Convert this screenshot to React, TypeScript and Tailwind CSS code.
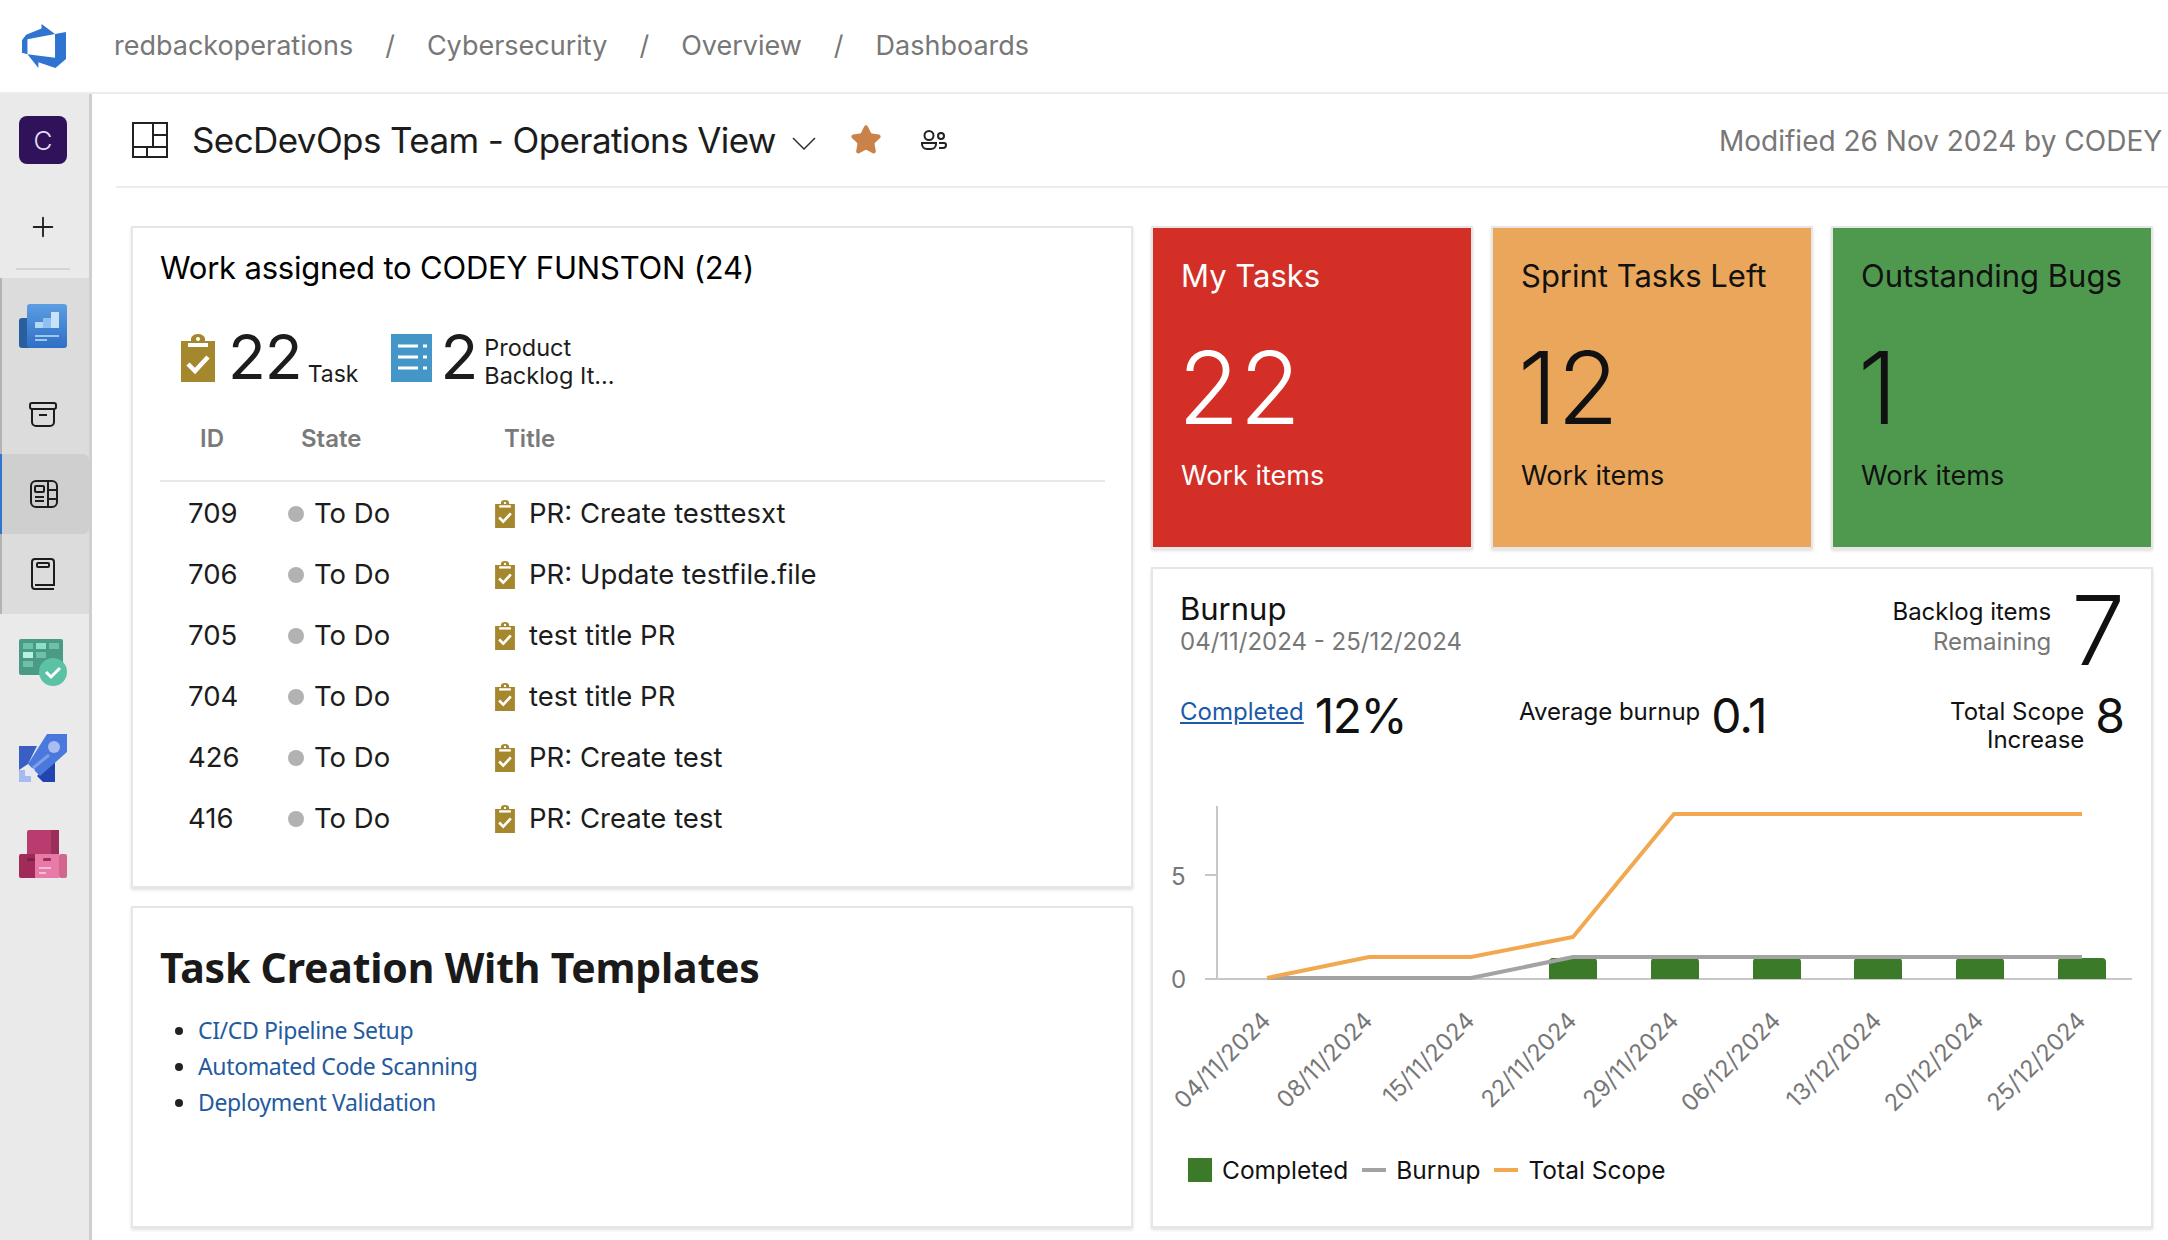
import React from "react";
import { LuPlus, LuStar } from "react-icons/lu";

const font = { fontFamily: "Inter, 'Liberation Sans', sans-serif" };

function Logo() {
  return (
    <svg viewBox="0 0 24 24" className="w-[44px] h-[44px]" fill="#2f74d0">
      <path d="M0 8.877L2.247 5.91l8.405-3.416V.022l7.37 5.393L2.966 8.338v8.225L0 15.707zm24-4.45v14.651l-5.753 4.9-9.303-3.057v3.056l-5.978-7.416 15.057 1.798V5.415z" />
    </svg>
  );
}

function OverviewIcon() {
  return (
    <svg viewBox="0 0 48 44" className="w-[48px] h-[44px]">
      <defs>
        <linearGradient id="ov" x1="0" y1="0" x2="0" y2="1">
          <stop offset="0" stopColor="#5c9de2" />
          <stop offset="1" stopColor="#2f6fc6" />
        </linearGradient>
      </defs>
      <rect x="0" y="14" width="14" height="30" rx="3" fill="#2a5f9e" />
      <rect x="8" y="0" width="40" height="44" rx="3" fill="url(#ov)" />
      <rect x="16" y="18" width="8" height="6" fill="#b6d6f5" />
      <rect x="24" y="14" width="8" height="10" fill="#8fc0ee" />
      <rect x="32" y="8" width="8" height="16" fill="#c9e2f8" />
      <rect x="16" y="31" width="24" height="2" fill="#9cc7f0" />
      <rect x="16" y="35" width="12" height="2" fill="#9cc7f0" />
    </svg>
  );
}

function BoxIcon() {
  return (
    <svg viewBox="0 0 28 25" className="w-[28px] h-[25px]" fill="none" stroke="#1c1c1c" strokeWidth="2">
      <rect x="1" y="1" width="26" height="6" rx="2" />
      <path d="M3 7v13a4 4 0 0 0 4 4h14a4 4 0 0 0 4-4V7" />
      <path d="M10 13h8" />
    </svg>
  );
}

function NewsIcon() {
  return (
    <svg viewBox="0 0 28 28" className="w-[28px] h-[28px]" fill="none" stroke="#1c1c1c" strokeWidth="2">
      <rect x="1" y="1" width="26" height="26" rx="5" />
      <path d="M18 1v26M18 10h9M18 19h9M5 17h9M5 21h9" />
      <rect x="5" y="6" width="9" height="6" rx="1" />
    </svg>
  );
}

function NotebookIcon() {
  return (
    <svg viewBox="0 0 24 32" className="w-[24px] h-[32px]" fill="none" stroke="#1c1c1c" strokeWidth="2">
      <path d="M23 31H4a3 3 0 0 1-3-3V4a3 3 0 0 1 3-3h16a3 3 0 0 1 3 3v23H4" />
      <rect x="6" y="5" width="12" height="4" rx="1" />
    </svg>
  );
}

function BoardsIcon() {
  return (
    <svg viewBox="0 0 48 47" className="w-[48px] h-[47px]">
      <rect x="0" y="0" width="44" height="36" rx="2" fill="#4a9b85" />
      <rect x="4" y="4" width="10" height="6" fill="#6fc0a8" />
      <rect x="17" y="4" width="10" height="6" fill="#8be0c8" />
      <rect x="30" y="4" width="10" height="6" fill="#6fc0a8" />
      <rect x="4" y="13" width="10" height="6" fill="#b5f2e0" />
      <rect x="17" y="13" width="10" height="6" fill="#6fc0a8" />
      <rect x="4" y="22" width="10" height="6" fill="#6fc0a8" />
      <ellipse cx="34" cy="33" rx="14" ry="14" fill="#5cc2a5" />
      <path d="M27 33l5 5 9-9" fill="none" stroke="#fff" strokeWidth="3" />
    </svg>
  );
}

function RocketIcon() {
  return (
    <svg viewBox="0 0 48 48" className="w-[48px] h-[48px]">
      <path d="M0 12h18L9 30l-9 6z" fill="#3a5fc4" />
      <path d="M18 42l18-18v24H24z" fill="#2244ae" />
      <path d="M9 30L28 0h20v18L21 42z" fill="#4a78dc" />
      <ellipse cx="35" cy="13" rx="6" ry="6" fill="#a9bdf0" />
      <path d="M14 34l16-13" stroke="#7f9ee8" strokeWidth="3" />
      <path d="M0 36h6v6h6v6H0z" fill="#a6baf2" />
      <path d="M10 40l5-5" stroke="#dfe8ff" strokeWidth="3" />
    </svg>
  );
}

function ArtifactsIcon() {
  return (
    <svg viewBox="0 0 48 48" className="w-[48px] h-[48px]">
      <rect x="8" y="0" width="32" height="26" rx="2" fill="#b83d6e" />
      <rect x="32" y="0" width="8" height="26" fill="#9b2f5b" />
      <rect x="0" y="24" width="20" height="24" rx="2" fill="#a02a58" />
      <rect x="16" y="24" width="24" height="24" fill="#e87aa8" />
      <rect x="40" y="24" width="8" height="24" rx="2" fill="#d1668f" />
      <rect x="24" y="28" width="8" height="3" rx="1" fill="#a02a58" />
      <rect x="8" y="28" width="8" height="3" rx="1" fill="#7e1f45" />
      <rect x="20" y="37" width="12" height="2" fill="#f6bcd3" />
      <rect x="20" y="42" width="7" height="2" fill="#f6bcd3" />
    </svg>
  );
}

function TaskIcon({ small }: { small?: boolean }) {
  return (
    <svg viewBox="0 0 34 48" className={small ? "w-[20px] h-[28px]" : "w-[34px] h-[48px]"}>
      <path d="M0 7h10V5a7 5 0 0 1 14 0v2h10v41H0z" fill="#a5872e" />
      <rect x="7" y="9" width="20" height="4" fill="#fff" />
      <circle cx="17" cy="5" r="2" fill="#fff" />
      <path d="M7 30l7 7 13-14" fill="none" stroke="#fff" strokeWidth="4.5" />
    </svg>
  );
}

function BacklogIcon() {
  return (
    <svg viewBox="0 0 41 48" className="w-[41px] h-[48px]">
      <rect width="41" height="48" fill="#4596c8" />
      <path d="M7 12h20M7 23h20M7 34h20" stroke="#fff" strokeWidth="3" />
      <path d="M32 12h4M32 23h4M32 34h4" stroke="#fff" strokeWidth="3" />
    </svg>
  );
}

function Sidebar() {
  return (
    <aside className="w-[92px] shrink-0 bg-[#eaeaea] border-r-[3px] border-[#cfcfcf] flex flex-col">
      <div className="h-[184px] pr-[3px] flex flex-col items-center">
        <div className="mt-[22px] w-[48px] h-[48px] rounded-[8px] bg-[#2f1259] text-[#e4ddf0] flex items-center justify-center text-[26px] font-light">
          C
        </div>
        <LuPlus className="mt-[47px] w-[32px] h-[32px] text-[#222]" strokeWidth={1.4} />
        <div className="mt-[25px] w-[54px] h-[2px] bg-[#d4d4d4]" />
      </div>
      <div className="bg-[#dcdcdc] border-l-[2px] border-[#b3b3b3]">
        <div className="h-[96px] flex items-center justify-center pr-[5px]"><OverviewIcon /></div>
        <div className="h-[80px] flex items-center justify-center pr-[5px]"><BoxIcon /></div>
        <div className="h-[80px] -ml-[2px] flex items-center justify-center pr-[3px] bg-[#cfcfcf] border-l-[2px] border-[#2f74d0] rounded-r-[6px]"><NewsIcon /></div>
        <div className="h-[80px] flex items-center justify-center pr-[5px]"><NotebookIcon /></div>
      </div>
      <div className="h-[96px] flex items-center justify-center pr-[3px]"><BoardsIcon /></div>
      <div className="h-[96px] flex items-center justify-center pr-[3px]"><RocketIcon /></div>
      <div className="h-[96px] flex items-center justify-center pr-[3px]"><ArtifactsIcon /></div>
    </aside>
  );
}

const rows = [
  ["709", "PR: Create testtesxt"],
  ["706", "PR: Update testfile.file"],
  ["705", "test title PR"],
  ["704", "test title PR"],
  ["426", "PR: Create test"],
  ["416", "PR: Create test"],
];

function WorkCard() {
  return (
    <div className="h-[662px] bg-white border-2 border-[#e6e6e6] shadow-[0_2px_3px_rgba(0,0,0,0.12)] pl-[27px] pr-[26px]">
      <h2 className="mt-[21px] text-[31px] leading-[38px] tracking-[-0.2px] text-black">Work assigned to CODEY FUNSTON (24)</h2>
      <div className="mt-[45px] ml-[21px] flex items-end h-[50px] text-[#1c1c1c]">
        <TaskIcon />
        <span className="ml-[13px] text-[62px] leading-[50px] font-normal tracking-[-1px]">22</span>
        <span className="ml-[6px] text-[23px] leading-[28px] -mb-[6px]">Task</span>
        <div className="ml-[33px]"><BacklogIcon /></div>
        <span className="ml-[8px] text-[62px] leading-[50px] font-normal">2</span>
        <span className="ml-[6px] text-[23.5px] leading-[28px] -mb-[8px]">Product<br />Backlog It...</span>
      </div>
      <div className="mt-[43px] h-[57px] border-b-2 border-[#e8e8e8] grid grid-cols-[141px_203px_1fr] items-start text-[24px] leading-[28px] font-semibold text-[#7a7a7a]">
        <span className="pl-[40px]">ID</span>
        <span>State</span>
        <span>Title</span>
      </div>
      <div className="mt-[1px]">
        {rows.map(([id, title]) => (
          <div key={id} className="h-[61px] grid grid-cols-[128px_207px_1fr] items-center text-[27.5px] text-[#1c1c1c]">
            <span className="pl-[28px]">{id}</span>
            <span className="flex items-center">
              <span className="w-[16px] h-[16px] rounded-full bg-[#b2b2b2] mr-[10px]" />
              To Do
            </span>
            <span className="flex items-center gap-[14px]">
              <TaskIcon small />
              {title}
            </span>
          </div>
        ))}
      </div>
    </div>
  );
}

function TemplatesCard() {
  return (
    <div className="h-[322px] bg-white border-2 border-[#e6e6e6] shadow-[0_2px_3px_rgba(0,0,0,0.12)] pl-[27px]" style={{ fontFamily: "'Noto Sans', sans-serif" }}>
      <h2 className="mt-[34px] text-[41px] leading-[50px] font-bold tracking-[-0.2px] text-[#1a1a1a]">Task Creation With Templates</h2>
      <ul className="mt-[20px] list-disc pl-[38px] text-[23px] leading-[36px] tracking-[-0.36px] text-[#245a9e] marker:text-[#222]">
        <li>CI/CD Pipeline Setup</li>
        <li>Automated Code Scanning</li>
        <li>Deployment Validation</li>
      </ul>
    </div>
  );
}

function Tile({ title, value, bg }: { title: string; value: string; bg: string }) {
  return (
    <div className={`h-[323px] pl-[28px] border-2 border-[#e6e6e6] shadow-[0_2px_3px_rgba(0,0,0,0.12)] ${bg}`}>
      <div className="mt-[28px] text-[31px] leading-[40px]">{title}</div>
      <div className="mt-[34px] -ml-[3px] text-[100px] leading-[116px] font-light">{value}</div>
      <div className="mt-[12px] text-[27px] leading-[36px]">Work items</div>
    </div>
  );
}

const dates = ["04/11/2024", "08/11/2024", "15/11/2024", "22/11/2024", "29/11/2024", "06/12/2024", "13/12/2024", "20/12/2024", "25/12/2024"];
const xs = [1267, 1369, 1471, 1573, 1675, 1777, 1878, 1980, 2082];

function Chart() {
  return (
    <svg viewBox="1153 790 1000 340" className="block w-[1000px] h-[340px]" style={font}>
      <path d="M1217 806V979M1205 979H2132M1205 875H1217" stroke="#c8c8c8" strokeWidth="2" fill="none" />
      {xs.slice(3).map((x) => (
        <path key={x} d="M-24 21v-17a4 4 0 0 1 4-4h40a4 4 0 0 1 4 4v17z" transform={`translate(${x} 958)`} fill="#3a7a28" />
      ))}
      <polyline points="1267,978 1471,978 1573,957 2082,957" fill="none" stroke="#a3a3a3" strokeWidth="4" />
      <polyline points="1267,978 1369,957 1471,957 1573,937 1674,814 2082,814" fill="none" stroke="#f2a851" strokeWidth="4" />
      <text x="1171" y="885" fontSize="24" fill="#777">5</text>
      <text x="1171" y="988" fontSize="24" fill="#777">0</text>
      {dates.map((d, i) => (
        <text key={d} fontSize="23.5" fill="#777" textAnchor="end" transform={`translate(${xs[i] + 5} 1022) rotate(-45)`}>
          {d}
        </text>
      ))}
    </svg>
  );
}

function BurnupCard() {
  return (
    <div className="h-[661px] bg-white border-2 border-[#e6e6e6] shadow-[0_2px_3px_rgba(0,0,0,0.12)] pl-[27px] pr-[26px]">
      <div className="mt-[21px] flex justify-between text-[#111]">
        <div>
          <div className="text-[31px] leading-[38px]">Burnup</div>
          <div className="text-[24px] leading-[28px] text-[#777]">04/11/2024 - 25/12/2024</div>
        </div>
        <div className="flex items-start">
          <div className="text-right text-[24px] leading-[30px] mt-[7px]">
            <div>Backlog items</div>
            <div className="text-[#777]">Remaining</div>
          </div>
          <div className="ml-[20px] text-[96px] leading-[80px] font-light">7</div>
        </div>
      </div>
      <div className="mt-[21px] grid grid-cols-[339px_1fr_auto] items-start text-[#111]">
        <div className="flex items-center gap-[11px]">
          <a className="mb-[8px] text-[24px] text-[#1b5aa8] underline">Completed</a>
          <span className="text-[48px] leading-[50px] font-normal tracking-[-1.5px]">12%</span>
        </div>
        <div className="flex items-center gap-[11px]">
          <span className="mb-[8px] text-[24px]">Average burnup</span>
          <span className="text-[48px] leading-[50px] font-normal tracking-[-1px]">0.1</span>
        </div>
        <div className="flex items-start gap-[11px]">
          <div className="text-right text-[24px] leading-[28px] mt-[7px]">Total Scope<br />Increase</div>
          <span className="text-[48px] leading-[50px] font-normal">8</span>
        </div>
      </div>
      <div className="-ml-[27px] mt-[36px]">
        <Chart />
      </div>
      <div className="mt-[24px] ml-[8px] flex items-center text-[24.5px] leading-[32px] text-[#111]">
        <span className="w-[24px] h-[24px] bg-[#3a7a28]" />
        <span className="ml-[10px]">Completed</span>
        <span className="ml-[14px] w-[24px] h-[4px] bg-[#a3a3a3]" />
        <span className="ml-[10px]">Burnup</span>
        <span className="ml-[14px] w-[24px] h-[4px] bg-[#f2a851]" />
        <span className="ml-[10px]">Total Scope</span>
      </div>
    </div>
  );
}

export default function App() {
  const crumbs = ["redbackoperations", "Cybersecurity", "Overview", "Dashboards"];
  return (
    <div className="w-[2168px] h-[1240px] overflow-hidden bg-white flex flex-col" style={font}>
      <header className="h-[94px] shrink-0 border-b-2 border-[#ececec] flex items-center">
        <div className="w-[114px] pl-[22px]"><Logo /></div>
        <nav className="flex items-center gap-[32px] text-[27px] text-[#777]">
          {crumbs.map((c, i) => (
            <React.Fragment key={c}>
              {i > 0 && <span>/</span>}
              <span>{c}</span>
            </React.Fragment>
          ))}
        </nav>
      </header>
      <div className="flex flex-1 min-h-0">
        <Sidebar />
        <main className="flex-1 min-w-0">
          <div className="ml-[24px] h-[94px] border-b-2 border-[#ececec] flex items-center pl-[16px] whitespace-nowrap">
            <svg viewBox="0 0 36 36" className="w-[36px] h-[36px]" fill="none" stroke="#222" strokeWidth="2">
              <rect x="1" y="1" width="34" height="34" />
              <path d="M21 1v24M21 13h14M1 25h34M15 25v10" />
            </svg>
            <h1 className="ml-[24px] text-[35px] tracking-[-0.6px] text-[#1c1c1c]">SecDevOps Team - Operations View</h1>
            <svg viewBox="0 0 24 13" className="ml-[16px] mt-[6px] w-[24px] h-[13px]" fill="none" stroke="#333" strokeWidth="1.5">
              <path d="M1 1l11 11L23 1" />
            </svg>
            <LuStar className="ml-[34px] w-[32px] h-[32px] text-[#c9824a]" fill="currentColor" strokeWidth={2} />
            <svg viewBox="0 0 26 20" className="ml-[39px] w-[26px] h-[20px]" fill="none" stroke="#222" strokeWidth="2">
              <circle cx="8" cy="5.5" r="4.5" />
              <circle cx="20" cy="6" r="3" />
              <path d="M1 13h14v1a5 5 0 0 1-5 5H6a5 5 0 0 1-5-5zM18 13h5a2 2 0 0 1 2 2 3 3 0 0 1-3 3h-4" />
            </svg>
            <span className="ml-auto mt-[2px] shrink-0 w-[449px] text-[28px] text-[#777] overflow-hidden">Modified 26 Nov 2024 by CODEY F</span>
          </div>
          <div className="ml-[39px] mt-[38px] grid grid-cols-[1002px_1002px] gap-x-[18px]">
            <div className="flex flex-col gap-[18px]">
              <WorkCard />
              <TemplatesCard />
            </div>
            <div className="flex flex-col gap-[18px]">
              <div className="grid grid-cols-3 gap-[18px]">
                <Tile title="My Tasks" value="22" bg="bg-[#d32f27] text-white" />
                <Tile title="Sprint Tasks Left" value="12" bg="bg-[#eaa75b] text-[#111]" />
                <Tile title="Outstanding Bugs" value="1" bg="bg-[#4f994f] text-[#111]" />
              </div>
              <BurnupCard />
            </div>
          </div>
        </main>
      </div>
    </div>
  );
}
